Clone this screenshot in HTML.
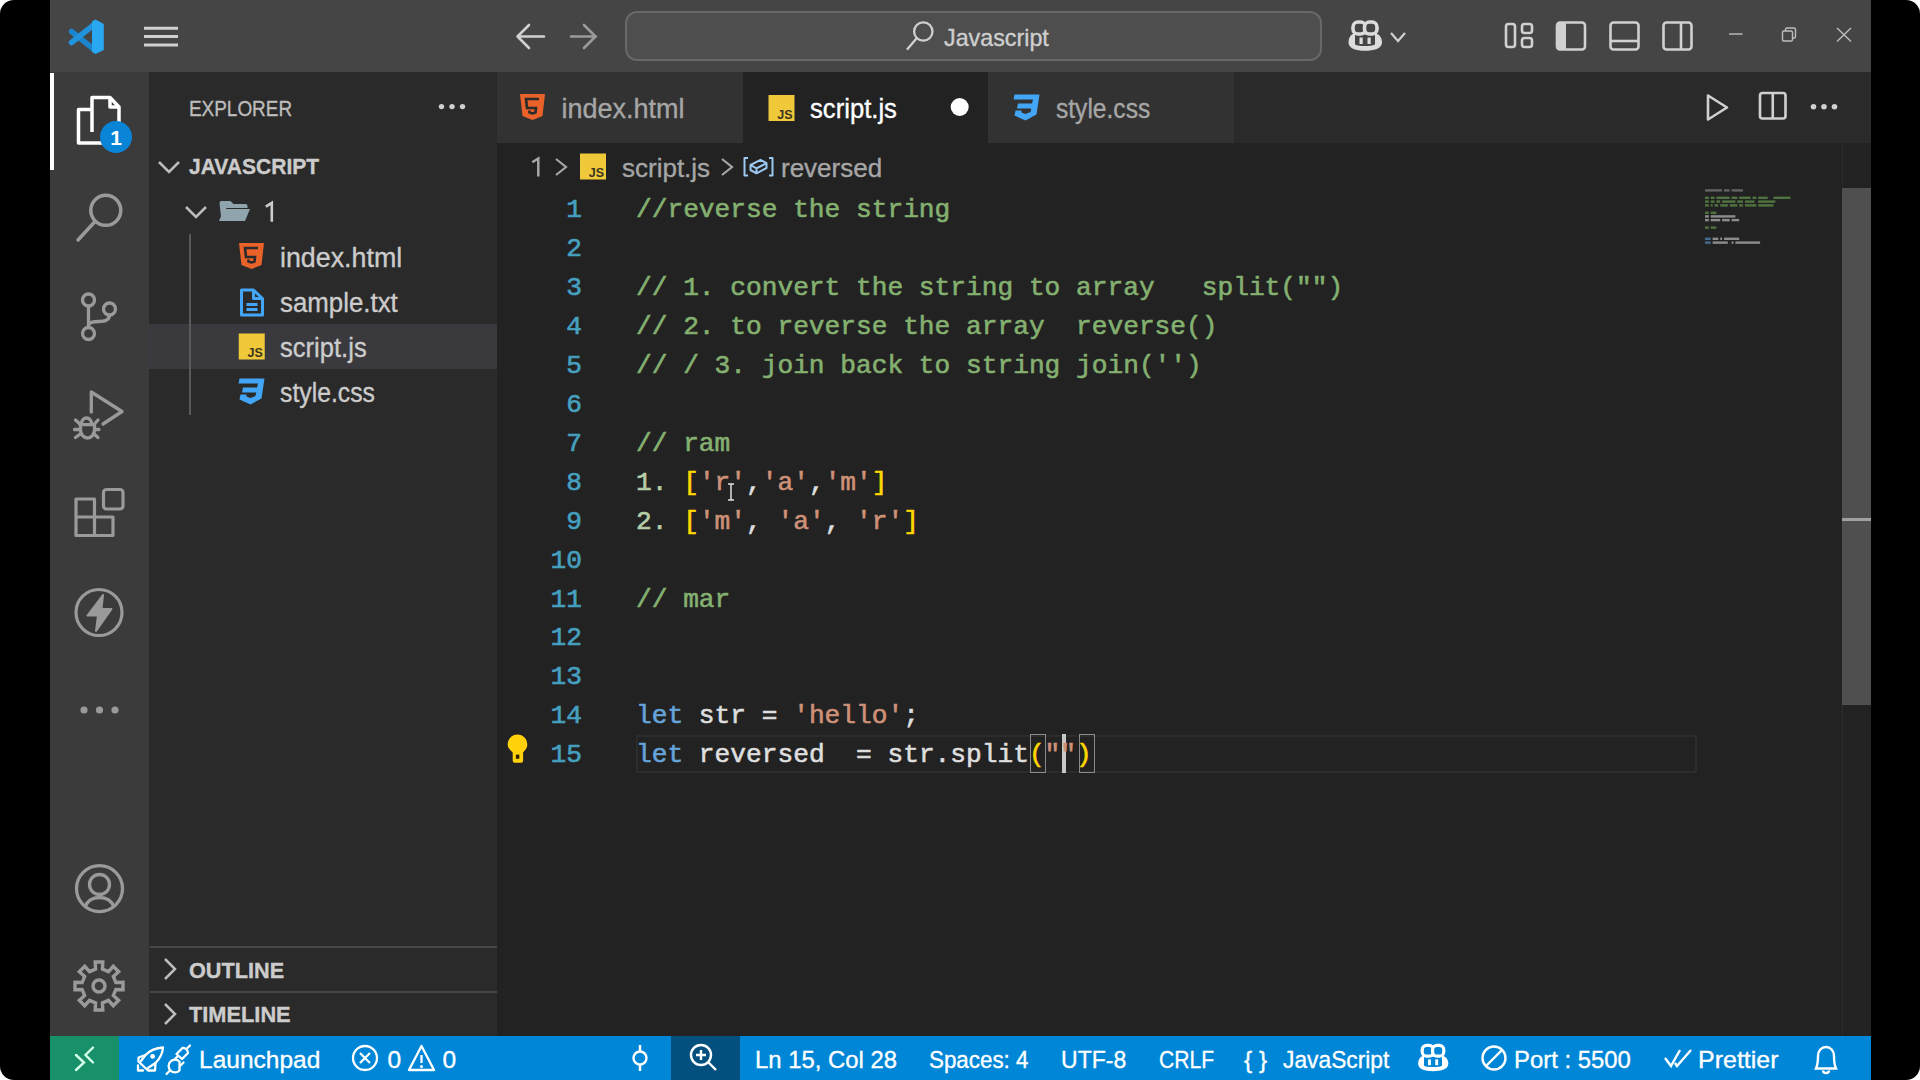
<!DOCTYPE html>
<html><head><meta charset="utf-8"><title>VS Code</title>
<style>
html,body{margin:0;padding:0;width:1920px;height:1080px;overflow:hidden;background:#ffffff;}
body{position:relative;font-family:"Liberation Sans",sans-serif;}
div{position:absolute;box-sizing:border-box;}
.t{white-space:pre;line-height:1;transform-origin:0 0;-webkit-text-stroke:0.35px currentColor;}
.code{font-family:"Liberation Mono",monospace;font-size:26.2px;line-height:39px;height:39px;white-space:pre;-webkit-text-stroke:0.6px currentColor;}
svg{position:absolute;left:0;top:0;}
</style></head><body>
<div style="left:0;top:0;width:1920px;height:1080px;background:#000;border-radius:14px;"></div><div style="left:50px;top:0px;width:1821px;height:72px;background:#454545;"></div><div style="left:50px;top:72px;width:99px;height:964px;background:#3b3b3b;"></div><div style="left:149px;top:72px;width:348px;height:964px;background:#2a2a2a;"></div><div style="left:497px;top:72px;width:1374px;height:964px;background:#222222;"></div><div style="left:497px;top:72px;width:1374px;height:71px;background:#2a2a2a;"></div><div style="left:497px;top:72px;width:246px;height:71px;background:#323232;"></div><div style="left:743px;top:72px;width:245px;height:71px;background:#222222;"></div><div style="left:988px;top:72px;width:246px;height:71px;background:#323232;"></div><div style="left:50px;top:1036px;width:1821px;height:44px;background:#0086d6;"></div><div style="left:50px;top:1036px;width:69px;height:44px;background:#18906a;"></div><div style="left:671px;top:1036px;width:69px;height:44px;background:#03507f;"></div><div style="left:625px;top:11px;width:697px;height:50px;background:#4e4e4e;border:2px solid #686868;border-radius:12px;"></div><div style="left:149px;top:324px;width:348px;height:45px;background:#3a3a3e;"></div><div style="left:150px;top:946px;width:347px;height:2px;background:#474747;"></div><div style="left:150px;top:991px;width:347px;height:2px;background:#474747;"></div><div style="left:189px;top:234px;width:2px;height:181px;background:#5a5a5a;"></div><div style="left:636px;top:735px;width:1061px;height:38px;border:2px solid #2c2c2c;"></div><div style="left:1030px;top:734px;width:16px;height:39px;border:1.5px solid #8a8a8a;"></div><div style="left:1079px;top:734px;width:16px;height:39px;border:1.5px solid #8a8a8a;"></div><div style="left:1062px;top:734px;width:4px;height:39px;background:#c8c8c8;"></div><div style="left:1842px;top:143px;width:1px;height:893px;background:#2c2c2c;"></div><div style="left:1842px;top:188px;width:29px;height:517px;background:#4f4f4f;"></div><div style="left:1842px;top:518px;width:29px;height:3px;background:#a0a0a0;"></div><div class="t" style="left:944px;top:25.52px;font-size:24px;color:#cfcfcf;font-weight:400;transform:scaleX(0.97);">Javascript</div><div class="t" style="left:561.5px;top:95.59px;font-size:27px;color:#a6a6a6;font-weight:400;">index.html</div><div class="t" style="left:810px;top:95.59px;font-size:27px;color:#ffffff;font-weight:400;transform:scaleX(0.95);">script.js</div><div class="t" style="left:1055.5px;top:95.59px;font-size:27px;color:#a6a6a6;font-weight:400;transform:scaleX(0.91);">style.css</div><div class="t" style="left:622px;top:154.53px;font-size:26px;color:#a6a6a6;font-weight:400;">script.js</div><div class="t" style="left:781px;top:154.53px;font-size:26px;color:#a6a6a6;font-weight:400;">reversed</div><div class="t" style="left:188.7px;top:98.11px;font-size:22px;color:#bdbdbd;font-weight:400;transform:scaleX(0.86);">EXPLORER</div><div class="t" style="left:189px;top:155.99px;font-size:22.5px;color:#cccccc;font-weight:700;transform:scaleX(0.935);">JAVASCRIPT</div><div class="t" style="left:279.5px;top:244.26px;font-size:27.5px;color:#cccccc;font-weight:400;transform:scaleX(0.975);">index.html</div><div class="t" style="left:280px;top:289.26px;font-size:27.5px;color:#cccccc;font-weight:400;transform:scaleX(0.94);">sample.txt</div><div class="t" style="left:279.5px;top:334.26px;font-size:27.5px;color:#cccccc;font-weight:400;transform:scaleX(0.93);">script.js</div><div class="t" style="left:280px;top:379.26px;font-size:27.5px;color:#cccccc;font-weight:400;transform:scaleX(0.9);">style.css</div><div class="t" style="left:189.4px;top:960.11px;font-size:22px;color:#cccccc;font-weight:700;transform:scaleX(0.985);">OUTLINE</div><div class="t" style="left:189.4px;top:1004.21px;font-size:22px;color:#cccccc;font-weight:700;transform:scaleX(0.99);">TIMELINE</div><div class="t" style="left:199px;top:1047.80px;font-size:24.5px;color:#ffffff;font-weight:400;">Launchpad</div><div class="t" style="left:387.5px;top:1047.80px;font-size:24.5px;color:#ffffff;font-weight:400;">0</div><div class="t" style="left:442.5px;top:1047.80px;font-size:24.5px;color:#ffffff;font-weight:400;">0</div><div class="t" style="left:755px;top:1047.80px;font-size:24.5px;color:#ffffff;font-weight:400;transform:scaleX(0.974);">Ln 15, Col 28</div><div class="t" style="left:929px;top:1047.80px;font-size:24.5px;color:#ffffff;font-weight:400;transform:scaleX(0.913);">Spaces: 4</div><div class="t" style="left:1061px;top:1047.80px;font-size:24.5px;color:#ffffff;font-weight:400;transform:scaleX(0.94);">UTF-8</div><div class="t" style="left:1159px;top:1047.80px;font-size:24.5px;color:#ffffff;font-weight:400;transform:scaleX(0.86);">CRLF</div><div class="t" style="left:1244px;top:1047.80px;font-size:24.5px;color:#ffffff;font-weight:400;">{ }</div><div class="t" style="left:1283px;top:1047.80px;font-size:24.5px;color:#ffffff;font-weight:400;transform:scaleX(0.93);">JavaScript</div><div class="t" style="left:1514px;top:1047.80px;font-size:24.5px;color:#ffffff;font-weight:400;transform:scaleX(0.975);">Port : 5500</div><div class="t" style="left:1698px;top:1047.80px;font-size:24.5px;color:#ffffff;font-weight:400;transform:scaleX(1.02);">Prettier</div><div class="code" style="left:636px;top:191.00px;color:#dedede"><span style="color:#84b070">//reverse the string</span></div><div class="code" style="left:520px;top:191.00px;width:62px;text-align:right;color:#46a0c0">1</div><div class="code" style="left:636px;top:229.95px;color:#dedede"></div><div class="code" style="left:520px;top:229.95px;width:62px;text-align:right;color:#46a0c0">2</div><div class="code" style="left:636px;top:268.90px;color:#dedede"><span style="color:#84b070">// 1. convert the string to array   split("")</span></div><div class="code" style="left:520px;top:268.90px;width:62px;text-align:right;color:#46a0c0">3</div><div class="code" style="left:636px;top:307.85px;color:#dedede"><span style="color:#84b070">// 2. to reverse the array  reverse()</span></div><div class="code" style="left:520px;top:307.85px;width:62px;text-align:right;color:#46a0c0">4</div><div class="code" style="left:636px;top:346.80px;color:#dedede"><span style="color:#84b070">// / 3. join back to string join('')</span></div><div class="code" style="left:520px;top:346.80px;width:62px;text-align:right;color:#46a0c0">5</div><div class="code" style="left:636px;top:385.75px;color:#dedede"></div><div class="code" style="left:520px;top:385.75px;width:62px;text-align:right;color:#46a0c0">6</div><div class="code" style="left:636px;top:424.70px;color:#dedede"><span style="color:#84b070">// ram</span></div><div class="code" style="left:520px;top:424.70px;width:62px;text-align:right;color:#46a0c0">7</div><div class="code" style="left:636px;top:463.65px;color:#dedede"><span style="color:#b5cea8">1.</span> <span style="color:#ffd700">[</span><span style="color:#ce9178">'r'</span><span style="color:#dedede">,</span><span style="color:#ce9178">'a'</span><span style="color:#dedede">,</span><span style="color:#ce9178">'m'</span><span style="color:#ffd700">]</span></div><div class="code" style="left:520px;top:463.65px;width:62px;text-align:right;color:#46a0c0">8</div><div class="code" style="left:636px;top:502.60px;color:#dedede"><span style="color:#b5cea8">2.</span> <span style="color:#ffd700">[</span><span style="color:#ce9178">'m'</span><span style="color:#dedede">, </span><span style="color:#ce9178">'a'</span><span style="color:#dedede">, </span><span style="color:#ce9178">'r'</span><span style="color:#ffd700">]</span></div><div class="code" style="left:520px;top:502.60px;width:62px;text-align:right;color:#46a0c0">9</div><div class="code" style="left:636px;top:541.55px;color:#dedede"></div><div class="code" style="left:520px;top:541.55px;width:62px;text-align:right;color:#46a0c0">10</div><div class="code" style="left:636px;top:580.50px;color:#dedede"><span style="color:#84b070">// mar</span></div><div class="code" style="left:520px;top:580.50px;width:62px;text-align:right;color:#46a0c0">11</div><div class="code" style="left:636px;top:619.45px;color:#dedede"></div><div class="code" style="left:520px;top:619.45px;width:62px;text-align:right;color:#46a0c0">12</div><div class="code" style="left:636px;top:658.40px;color:#dedede"></div><div class="code" style="left:520px;top:658.40px;width:62px;text-align:right;color:#46a0c0">13</div><div class="code" style="left:636px;top:697.35px;color:#dedede"><span style="color:#66a3da">let</span><span style="color:#dedede"> str = </span><span style="color:#ce9178">'hello'</span><span style="color:#dedede">;</span></div><div class="code" style="left:520px;top:697.35px;width:62px;text-align:right;color:#46a0c0">14</div><div class="code" style="left:636px;top:736.30px;color:#dedede"><span style="color:#66a3da">let</span><span style="color:#dedede"> reversed  = str.split</span><span style="color:#ffd700">(</span><span style="color:#ce9178">""</span><span style="color:#ffd700">)</span></div><div class="code" style="left:520px;top:736.30px;width:62px;text-align:right;color:#46a0c0">15</div>
<svg width="1920" height="1080" viewBox="0 0 1920 1080"><g stroke-linecap="round"><line x1="71.5" y1="31.5" x2="93" y2="48.5" stroke="#1a84cc" stroke-width="5.5"/><line x1="71.5" y1="42.5" x2="93" y2="25.5" stroke="#2193dd" stroke-width="5.5"/></g><polygon points="92,21.5 95.5,19.6 103.8,24 103.8,50 95.5,54 92,52" fill="#2aa7f1"/><line x1="144" y1="28.3" x2="178" y2="28.3" stroke="#d0d0d0" stroke-width="3"/><line x1="144" y1="36.5" x2="178" y2="36.5" stroke="#d0d0d0" stroke-width="3"/><line x1="144" y1="45" x2="178" y2="45" stroke="#d0d0d0" stroke-width="3"/><g fill="none" stroke="#d0d0d0" stroke-width="2.6" stroke-linecap="round" stroke-linejoin="round"><path d="M544,36.5 H518 M529,25 L517.5,36.5 L529,48"/></g><g fill="none" stroke="#9a9a9a" stroke-width="2.6" stroke-linecap="round" stroke-linejoin="round"><path d="M571,36.5 H596 M584,25 L595.5,36.5 L584,48"/></g><g fill="none" stroke="#d0d0d0" stroke-width="2.3" stroke-linecap="round"><circle cx="923.3" cy="31.5" r="9.2"/><path d="M916.5,38.5 L907.5,49"/></g><g transform="translate(1365,36) scale(1.0) translate(-1365,-36)"><path d="M1348.5,42.5 C1348.5,36.5 1352,33.5 1355,33.5 H1375 C1378,33.5 1382,36.5 1382,42.5 C1382,48.5 1374,50.8 1365,50.8 C1356,50.8 1348.5,48.5 1348.5,42.5 Z" fill="#dcdcdc"/><path d="M1355,34.5 H1375 V44 C1375,45.5 1370,46 1365,46 C1360,46 1355,45.5 1355,44 Z" fill="#454545"/><rect x="1359.5" y="37.5" width="3.2" height="6.5" fill="#dcdcdc"/><rect x="1367.5" y="37.5" width="3.2" height="6.5" fill="#dcdcdc"/><rect x="1353" y="22" width="12.5" height="12" rx="5" fill="#454545" stroke="#dcdcdc" stroke-width="3.6"/><rect x="1364.5" y="22" width="12.5" height="12" rx="5" fill="#454545" stroke="#dcdcdc" stroke-width="3.6"/></g><polyline points="1391,33 1398,41 1405,33" fill="none" stroke="#d0d0d0" stroke-width="2.2"/><g fill="none" stroke="#d0d0d0" stroke-width="2.6"><rect x="1506" y="24" width="9" height="23" rx="2.5"/><rect x="1522" y="24" width="10" height="9" rx="2.5"/><rect x="1522" y="38" width="10" height="9" rx="2.5"/><rect x="1557" y="22.5" width="28" height="27" rx="3"/><rect x="1610.5" y="22.5" width="28" height="27" rx="3"/><line x1="1610.5" y1="41" x2="1638.5" y2="41"/><rect x="1663.5" y="22.5" width="28" height="27" rx="3"/><line x1="1681" y1="22.5" x2="1681" y2="49.5"/></g><path d="M1557,25.5 a3,3 0 0 1 3,-3 h6 v27 h-6 a3,3 0 0 1 -3,-3 z" fill="#d0d0d0"/><g fill="none" stroke="#bdbdbd" stroke-width="1.4"><line x1="1729" y1="34" x2="1742.5" y2="34"/><rect x="1782.5" y="31" width="10" height="10" rx="1.5"/><path d="M1785.5,31 v-1.5 a1.5,1.5 0 0 1 1.5,-1.5 h7 a1.5,1.5 0 0 1 1.5,1.5 v7 a1.5,1.5 0 0 1 -1.5,1.5 h-1.5"/><path d="M1837,28 L1851,41.5 M1851,28 L1837,41.5"/></g><g fill="none" stroke="#ffffff" stroke-width="3.5" stroke-linejoin="round"><path d="M92,132 V97.5 H110 L119,107 V128"/><path d="M110,97.5 V107 H119"/><path d="M91,109.5 H78.5 V143 H102"/></g><circle cx="116" cy="137" r="16" fill="#0a84d6"/><text x="116" y="145" text-anchor="middle" font-family="Liberation Sans" font-weight="700" font-size="21" fill="#fff">1</text><rect x="50" y="73" width="4" height="97" fill="#ffffff"/><g fill="none" stroke="#9a9a9a" stroke-width="3.5" stroke-linecap="round"><circle cx="105.8" cy="210.3" r="15"/><path d="M95,221.5 L78,240"/></g><g fill="none" stroke="#9a9a9a" stroke-width="3.3"><circle cx="88.5" cy="300" r="6"/><circle cx="109.5" cy="309" r="6"/><circle cx="88.5" cy="333.5" r="6"/><path d="M88.5,306 V327.5 M109.5,315 C109.5,321 104,321.5 99,321.5 C93,321.5 88.5,322 88.5,326"/></g><g fill="none" stroke="#9a9a9a" stroke-width="3.3" stroke-linejoin="round" stroke-linecap="round"><path d="M91.3,412 V392 L122,411.5 L103,424"/><path d="M81.5,423.5 a5,5.5 0 0 1 10,0"/><path d="M80,424.7 H94 M80.5,424.7 V430 a7,8 0 0 0 14,0 V424.7"/><path d="M75.5,420 L80.5,424.5 M98,420 L94,424.5 M74.5,429.5 H80.5 M99,429.5 H94.5 M75.5,437.5 L81,433.5 M98,437.5 L93.5,433.5"/></g><g fill="none" stroke="#9a9a9a" stroke-width="3.2" stroke-linejoin="round"><path d="M76,499 H94.5 V535.5 H76 Z M76,517 H113 V535.5 H94.5"/><rect x="103.5" y="489.5" width="19.5" height="19.5" rx="3"/></g><circle cx="99" cy="612.5" r="23" fill="none" stroke="#9a9a9a" stroke-width="3.2"/><polygon points="103,595 87.5,615.5 98,615.5 96,631 111.5,609 101.5,609" fill="#9a9a9a" stroke="#9a9a9a" stroke-width="2" stroke-linejoin="round"/><circle cx="84" cy="710" r="3.6" fill="#9a9a9a"/><circle cx="99.5" cy="710" r="3.6" fill="#9a9a9a"/><circle cx="115" cy="710" r="3.6" fill="#9a9a9a"/><g fill="none" stroke="#9a9a9a" stroke-width="3.3"><circle cx="99.5" cy="888.6" r="23"/><circle cx="99.5" cy="884.5" r="10"/><path d="M85,907 C88,899 94,897.5 99.5,897.5 C105,897.5 111,899 114,907"/></g><polygon points="95.57,969.15 95.20,962.00 102.80,962.00 102.43,969.15 108.49,971.66 113.28,966.34 118.66,971.72 113.34,976.51 115.85,982.57 123.00,982.20 123.00,989.80 115.85,989.43 113.34,995.49 118.66,1000.28 113.28,1005.66 108.49,1000.34 102.43,1002.85 102.80,1010.00 95.20,1010.00 95.57,1002.85 89.51,1000.34 84.72,1005.66 79.34,1000.28 84.66,995.49 82.15,989.43 75.00,989.80 75.00,982.20 82.15,982.57 84.66,976.51 79.34,971.72 84.72,966.34 89.51,971.66" fill="none" stroke="#9a9a9a" stroke-width="3.4" stroke-linejoin="miter"/><circle cx="99" cy="986" r="6" fill="none" stroke="#9a9a9a" stroke-width="3.4"/><g transform="translate(520,94) scale(1.0)"><path d="M0,0 H25 L22.5,22 L12.5,26 L2.5,22 Z" fill="#e8622a"/><path d="M19,5 H6 L7,14 H16 L15.5,18.5 L12.5,19.5 L9.5,18.5 L9.3,16.5" fill="none" stroke="#2b2b2b" stroke-width="2.6"/></g><g transform="translate(768.5,95) scale(1.0)"><rect x="0" y="0" width="26" height="26" fill="#f0c93a"/><text x="24" y="23.5" text-anchor="end" font-family="Liberation Sans" font-weight="700" font-size="12.5" fill="#3a3420">JS</text></g><g transform="translate(1012.5,94.5) scale(1.0)"><path d="M2,0 H27 L24,20 L13,26 L2,21 L3,16 H9 L9,18 L13,19.5 L18,17.5 L18.7,14 H4.5 L5.5,9 H19.5 L20.5,5 H1 Z" fill="#42a5f5"/></g><circle cx="959.7" cy="107" r="9" fill="#ffffff"/><g fill="none" stroke="#d0d0d0" stroke-width="2.6" stroke-linejoin="round"><path d="M1708,95.5 L1727,107.5 L1708,119.5 Z"/><rect x="1760" y="93" width="25.5" height="25.5" rx="2.5"/><line x1="1772.75" y1="93" x2="1772.75" y2="118.5"/></g><circle cx="1813.5" cy="106.7" r="2.8" fill="#d0d0d0"/><circle cx="1824" cy="106.7" r="2.8" fill="#d0d0d0"/><circle cx="1834.5" cy="106.7" r="2.8" fill="#d0d0d0"/><g fill="none" stroke="#a6a6a6" stroke-width="2.2"><polyline points="556,159 566,167 556,175"/><polyline points="722,159 732,167 722,175"/></g><g transform="translate(580,153.5) scale(1.0)"><rect x="0" y="0" width="26" height="26" fill="#f0c93a"/><text x="24" y="23.5" text-anchor="end" font-family="Liberation Sans" font-weight="700" font-size="12.5" fill="#3a3420">JS</text></g><g fill="none" stroke="#9cc9f2" stroke-width="2" stroke-linejoin="round"><path d="M748,158 H744.5 V175.5 H748 M769,158 H772.5 V175.5 H769"/><path d="M750.5,165 L760.5,159.8 L766.5,163.2 L766.5,168 L756.5,173.3 L750.5,170 Z M750.5,165 L756.5,168.4 L766.5,163.2 M756.5,168.4 V173.3"/></g><g fill="none" stroke="#bdbdbd" stroke-width="2.5"><polyline points="159,162 169,172 179,162"/><polyline points="186,207 196,217 206,207"/><polyline points="439,0" /></g><circle cx="441.5" cy="106.6" r="2.7" fill="#cfcfcf"/><circle cx="452" cy="106.6" r="2.7" fill="#cfcfcf"/><circle cx="462.5" cy="106.6" r="2.7" fill="#cfcfcf"/><path d="M219.5,203 a2,2 0 0 1 2,-2 h9 l3,3 h12 a2,2 0 0 1 2,2 v2 h-21 l-5,13 z" fill="#90a4ae"/><path d="M224,209 h26 l-5,12 h-26 z" fill="#90a4ae"/><g transform="translate(239,243) scale(1.0)"><path d="M0,0 H25 L22.5,22 L12.5,26 L2.5,22 Z" fill="#e8622a"/><path d="M19,5 H6 L7,14 H16 L15.5,18.5 L12.5,19.5 L9.5,18.5 L9.3,16.5" fill="none" stroke="#2b2b2b" stroke-width="2.6"/></g><g transform="translate(239.5,288.5)" fill="none" stroke="#42a5f5" stroke-width="3" stroke-linejoin="round"><path d="M2,1.5 H14 L23,10 V26.5 H2 Z"/><path d="M14,1.5 V10 H23"/><path d="M7,16 H18 M7,21 H18"/></g><g transform="translate(238.75,333.5) scale(1.0)"><rect x="0" y="0" width="26" height="26" fill="#f0c93a"/><text x="24" y="23.5" text-anchor="end" font-family="Liberation Sans" font-weight="700" font-size="12.5" fill="#3a3420">JS</text></g><g transform="translate(237.5,378.5) scale(1.0)"><path d="M2,0 H27 L24,20 L13,26 L2,21 L3,16 H9 L9,18 L13,19.5 L18,17.5 L18.7,14 H4.5 L5.5,9 H19.5 L20.5,5 H1 Z" fill="#42a5f5"/></g><g fill="none" stroke="#bdbdbd" stroke-width="2.5"><polyline points="165,959 175,969 165,979"/><polyline points="165,1004 175,1014 165,1024"/></g><path d="M271.8,221.7 V202.8 L265.8,206.6" fill="none" stroke="#cccccc" stroke-width="2.6" stroke-linejoin="miter"/><path d="M538.3,176.5 V158.5 L532.3,162.2" fill="none" stroke="#a6a6a6" stroke-width="2.5" stroke-linejoin="miter"/><path d="M517.5,734.6 C523,734.6 527.3,739 527.3,744.5 C527.3,748.5 524.5,750.5 523.1,752.5 V760.8 a2,2 0 0 1 -2,2 H514.7 a2,2 0 0 1 -2,-2 V752.5 C511,750.5 507.7,748.5 507.7,744.5 C507.7,739 512,734.6 517.5,734.6 Z" fill="#ffd10a"/><rect x="515.9" y="754.6" width="3.4" height="4.2" fill="#2a2000"/><rect x="1705.0" y="189.2" width="17.1" height="2.4" fill="#7a7a7a" opacity="0.75"/><rect x="1724.0" y="189.2" width="5.7" height="2.4" fill="#7a7a7a" opacity="0.75"/><rect x="1731.6" y="189.2" width="11.4" height="2.4" fill="#7a7a7a" opacity="0.75"/><rect x="1705.0" y="196.6" width="3.8" height="2.4" fill="#5f8f4a" opacity="0.75"/><rect x="1710.7" y="196.6" width="3.8" height="2.4" fill="#5f8f4a" opacity="0.75"/><rect x="1716.4" y="196.6" width="13.3" height="2.4" fill="#5f8f4a" opacity="0.75"/><rect x="1731.6" y="196.6" width="5.7" height="2.4" fill="#5f8f4a" opacity="0.75"/><rect x="1739.2" y="196.6" width="11.4" height="2.4" fill="#5f8f4a" opacity="0.75"/><rect x="1752.5" y="196.6" width="3.8" height="2.4" fill="#5f8f4a" opacity="0.75"/><rect x="1758.2" y="196.6" width="9.5" height="2.4" fill="#5f8f4a" opacity="0.75"/><rect x="1773.4" y="196.6" width="17.1" height="2.4" fill="#5f8f4a" opacity="0.75"/><rect x="1705.0" y="200.4" width="3.8" height="2.4" fill="#5f8f4a" opacity="0.75"/><rect x="1710.7" y="200.4" width="3.8" height="2.4" fill="#5f8f4a" opacity="0.75"/><rect x="1716.4" y="200.4" width="3.8" height="2.4" fill="#5f8f4a" opacity="0.75"/><rect x="1722.1" y="200.4" width="13.3" height="2.4" fill="#5f8f4a" opacity="0.75"/><rect x="1737.3" y="200.4" width="5.7" height="2.4" fill="#5f8f4a" opacity="0.75"/><rect x="1744.9" y="200.4" width="9.5" height="2.4" fill="#5f8f4a" opacity="0.75"/><rect x="1758.2" y="200.4" width="17.1" height="2.4" fill="#5f8f4a" opacity="0.75"/><rect x="1705.0" y="204.2" width="3.8" height="2.4" fill="#5f8f4a" opacity="0.75"/><rect x="1710.7" y="204.2" width="1.9" height="2.4" fill="#5f8f4a" opacity="0.75"/><rect x="1714.5" y="204.2" width="3.8" height="2.4" fill="#5f8f4a" opacity="0.75"/><rect x="1720.2" y="204.2" width="7.6" height="2.4" fill="#5f8f4a" opacity="0.75"/><rect x="1729.7" y="204.2" width="7.6" height="2.4" fill="#5f8f4a" opacity="0.75"/><rect x="1739.2" y="204.2" width="3.8" height="2.4" fill="#5f8f4a" opacity="0.75"/><rect x="1744.9" y="204.2" width="11.4" height="2.4" fill="#5f8f4a" opacity="0.75"/><rect x="1758.2" y="204.2" width="15.2" height="2.4" fill="#5f8f4a" opacity="0.75"/><rect x="1705.0" y="211.6" width="3.8" height="2.4" fill="#5f8f4a" opacity="0.75"/><rect x="1710.7" y="211.6" width="5.7" height="2.4" fill="#5f8f4a" opacity="0.75"/><rect x="1705.0" y="215.2" width="3.8" height="2.4" fill="#b0b0b0" opacity="0.75"/><rect x="1710.7" y="215.2" width="24.7" height="2.4" fill="#b0b0b0" opacity="0.75"/><rect x="1705.0" y="218.9" width="3.8" height="2.4" fill="#b0b0b0" opacity="0.75"/><rect x="1710.7" y="218.9" width="9.5" height="2.4" fill="#b0b0b0" opacity="0.75"/><rect x="1722.1" y="218.9" width="7.6" height="2.4" fill="#b0b0b0" opacity="0.75"/><rect x="1731.6" y="218.9" width="7.6" height="2.4" fill="#b0b0b0" opacity="0.75"/><rect x="1705.0" y="226.4" width="3.8" height="2.4" fill="#5f8f4a" opacity="0.75"/><rect x="1710.7" y="226.4" width="5.7" height="2.4" fill="#5f8f4a" opacity="0.75"/><rect x="1705.0" y="237.6" width="5.7" height="2.4" fill="#4d86b8" opacity="0.75"/><rect x="1712.6" y="237.6" width="5.7" height="2.4" fill="#b0b0b0" opacity="0.75"/><rect x="1720.2" y="237.6" width="1.9" height="2.4" fill="#b0b0b0" opacity="0.75"/><rect x="1724.0" y="237.6" width="15.2" height="2.4" fill="#b0b0b0" opacity="0.75"/><rect x="1705.0" y="241.4" width="5.7" height="2.4" fill="#4d86b8" opacity="0.75"/><rect x="1712.6" y="241.4" width="15.2" height="2.4" fill="#b0b0b0" opacity="0.75"/><rect x="1731.6" y="241.4" width="1.9" height="2.4" fill="#b0b0b0" opacity="0.75"/><rect x="1735.4" y="241.4" width="24.7" height="2.4" fill="#b0b0b0" opacity="0.75"/><g fill="none" stroke="#d4ffe9" stroke-width="2.4" stroke-linecap="round"><path d="M76,1055 L84,1062.5 L76,1070 M93,1047.5 L85.5,1055 L93,1062.5"/></g><g fill="none" stroke="#ffffff" stroke-width="2.3" stroke-linejoin="round" stroke-linecap="round"><path d="M163,1047.5 C155,1048 149.5,1051 145.5,1055 L138.5,1057.5 L138.5,1061.5 L148,1070.5 L155,1070.5 L155.5,1063 C159.5,1059 162.5,1054 163,1047.5 Z"/><path d="M141,1061 L145.5,1055 M148,1068 L155.5,1063"/><path d="M138,1065.5 V1070.5 H143"/><path d="M176.5,1054 L182.5,1048 C185,1047.5 188,1050 188,1053 L182,1059 Z M186.5,1049 L190,1045.5"/><path d="M179.5,1061.5 C177,1059 173,1059 170.5,1061.5 C168,1064 168,1068 170.5,1070.5 C173,1073 177,1073 179.5,1070.5 Z M169.5,1071 L166.5,1074 M174,1060 L177.5,1056.5 M180,1066 L183.5,1062.5"/></g><circle cx="152.6" cy="1056.4" r="2.4" fill="#ffffff"/><g fill="none" stroke="#ffffff" stroke-width="2.3"><circle cx="365" cy="1058" r="12"/><path d="M360,1053 L370,1063 M370,1053 L360,1063"/><path d="M421.5,1046 L434,1070 H409 Z" stroke-linejoin="round"/><path d="M421.5,1055 V1063"/></g><circle cx="421.5" cy="1066.5" r="1.5" fill="#fff"/><g fill="none" stroke="#ffffff" stroke-width="2.4"><circle cx="640" cy="1058" r="6.5"/><path d="M640,1045 V1051.5 M640,1064.5 V1071"/></g><g fill="none" stroke="#ffffff" stroke-width="2.4"><circle cx="701" cy="1055" r="10"/><path d="M708,1062 L716,1070 M696,1055 H706 M701,1050 V1060"/></g><g transform="translate(1433,1058) scale(0.9) translate(-1365,-36)"><path d="M1348.5,42.5 C1348.5,36.5 1352,33.5 1355,33.5 H1375 C1378,33.5 1382,36.5 1382,42.5 C1382,48.5 1374,50.8 1365,50.8 C1356,50.8 1348.5,48.5 1348.5,42.5 Z" fill="#ffffff"/><path d="M1355,34.5 H1375 V44 C1375,45.5 1370,46 1365,46 C1360,46 1355,45.5 1355,44 Z" fill="#0086d6"/><rect x="1359.5" y="37.5" width="3.2" height="6.5" fill="#ffffff"/><rect x="1367.5" y="37.5" width="3.2" height="6.5" fill="#ffffff"/><rect x="1353" y="22" width="12.5" height="12" rx="5" fill="#0086d6" stroke="#ffffff" stroke-width="3.6"/><rect x="1364.5" y="22" width="12.5" height="12" rx="5" fill="#0086d6" stroke="#ffffff" stroke-width="3.6"/></g><g fill="none" stroke="#ffffff" stroke-width="2.4"><circle cx="1494" cy="1058" r="11.5"/><path d="M1486,1066 L1502,1050"/><path d="M1665,1058 L1671,1066 L1680,1050 M1675,1063 L1677,1066 L1691,1050"/><path d="M1816,1068.5 C1818,1064 1818,1060 1818,1056 C1818,1050.5 1821.5,1047 1826,1047 C1830.5,1047 1834,1050.5 1834,1056 C1834,1060 1834,1064 1836,1068.5 Z M1823,1070.5 a3,2.5 0 0 0 6,0"/></g><path d="M728,484 h6 M731,484 v16 M728,500 h6" stroke="#e0e0e0" stroke-width="1.5" fill="none"/></svg>
</body></html>
